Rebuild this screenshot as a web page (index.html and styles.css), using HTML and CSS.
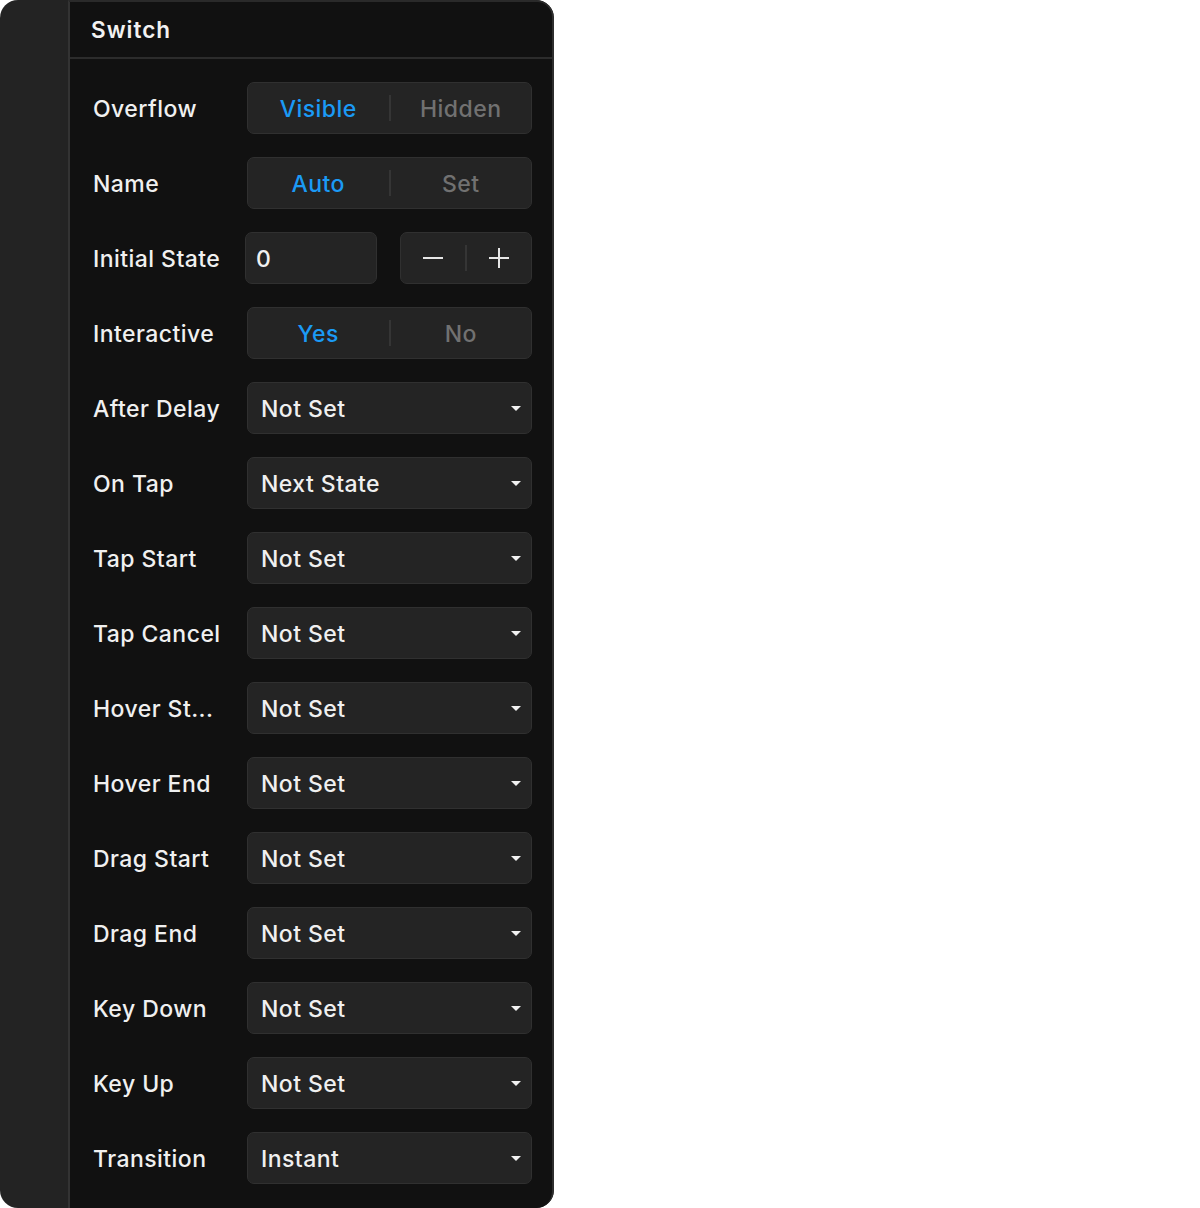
FILE: index.html
```html
<!DOCTYPE html>
<html>
<head>
<meta charset="utf-8">
<link rel="stylesheet" href="styles.css">
</head>
<body>
<div class="frame">
  <div class="strip"></div>
  <div class="panel">
    <div class="header">Switch</div>
    <div class="body">
      <div class="row">
        <div class="label">Overflow</div>
        <div class="seg"><span class="opt on">Visible</span><span class="div"></span><span class="opt">Hidden</span></div>
      </div>
      <div class="row">
        <div class="label">Name</div>
        <div class="seg"><span class="opt on">Auto</span><span class="div"></span><span class="opt">Set</span></div>
      </div>
      <div class="row">
        <div class="label">Initial State</div>
        <div class="pair">
          <div class="input"><span class="txt">0</span></div>
          <div class="stepper">
            <span class="step"><svg width="22" height="22" viewBox="0 0 22 22"><path d="M1 11H21" stroke="#e6e6e6" stroke-width="2"/></svg></span>
            <span class="div"></span>
            <span class="step"><svg width="22" height="22" viewBox="0 0 22 22"><path d="M1 11H21M11 1V21" stroke="#e6e6e6" stroke-width="2"/></svg></span>
          </div>
        </div>
      </div>
      <div class="row">
        <div class="label">Interactive</div>
        <div class="seg"><span class="opt on">Yes</span><span class="div"></span><span class="opt">No</span></div>
      </div>
      <div class="row"><div class="label">After Delay</div><div class="select"><span class="txt">Not Set</span><i class="caret"></i></div></div>
      <div class="row"><div class="label">On Tap</div><div class="select"><span class="txt">Next State</span><i class="caret"></i></div></div>
      <div class="row"><div class="label">Tap Start</div><div class="select"><span class="txt">Not Set</span><i class="caret"></i></div></div>
      <div class="row"><div class="label">Tap Cancel</div><div class="select"><span class="txt">Not Set</span><i class="caret"></i></div></div>
      <div class="row"><div class="label">Hover St...</div><div class="select"><span class="txt">Not Set</span><i class="caret"></i></div></div>
      <div class="row"><div class="label">Hover End</div><div class="select"><span class="txt">Not Set</span><i class="caret"></i></div></div>
      <div class="row"><div class="label">Drag Start</div><div class="select"><span class="txt">Not Set</span><i class="caret"></i></div></div>
      <div class="row"><div class="label">Drag End</div><div class="select"><span class="txt">Not Set</span><i class="caret"></i></div></div>
      <div class="row"><div class="label">Key Down</div><div class="select"><span class="txt">Not Set</span><i class="caret"></i></div></div>
      <div class="row"><div class="label">Key Up</div><div class="select"><span class="txt">Not Set</span><i class="caret"></i></div></div>
      <div class="row"><div class="label">Transition</div><div class="select"><span class="txt">Instant</span><i class="caret"></i></div></div>
    </div>
  </div>
</div>
</body>
</html>
```
FILE: styles.css
```css
* { box-sizing: border-box; }
html, body { margin: 0; padding: 0; background: #ffffff; }
body {
  font-family: Inter, "Noto Sans", sans-serif;
  -webkit-font-smoothing: antialiased;
}
.frame {
  width: 554px;
  height: 1208px;
  display: flex;
  background: #232323;
  border-radius: 18px;
  overflow: hidden;
}
.strip { width: 68px; flex: none; }
.panel {
  flex: 1;
  background: #111111;
  border-left: 2px solid #333333;
  border-top: 2px solid #2a2a2a;
  border-right: 2px solid #2e2e2e;
  border-radius: 0 17px 17px 0;
  display: flex;
  flex-direction: column;
}
.header {
  height: 57px;
  border-bottom: 2px solid #2c2c2c;
  display: flex;
  align-items: center;
  padding-left: 21px;
  padding-bottom: 1px;
  color: #f2f2f2;
  font-size: 22.5px;
  font-weight: 600;
  letter-spacing: 1px;
}
.body {
  padding: 23px 20px 0 23px;
  display: flex;
  flex-direction: column;
  gap: 23px;
}
.row {
  height: 52px;
  display: flex;
  align-items: center;
}
.label {
  width: 154px;
  flex: none;
  color: #f0f0f0;
  font-size: 23px;
  font-weight: 500;
  letter-spacing: 0.45px;
  white-space: nowrap;
  padding-top: 2px;
}
.seg, .select, .input, .stepper {
  height: 52px;
  background: #242424;
  border: 1px solid #303030;
  border-radius: 7px;
  font-size: 23px;
  font-weight: 500;
  letter-spacing: 0.45px;
}
.seg {
  width: 285px;
  display: flex;
  align-items: center;
}
.opt {
  flex: 1;
  text-align: center;
  color: #717171;
  padding-top: 2px;
}
.opt.on { color: #1b9af5; }
.txt { padding-top: 2px; }
.div {
  width: 2px;
  height: 26px;
  background: #353535;
  flex: none;
}
.pair {
  display: flex;
  gap: 23px;
  margin-left: -2px;
}
.input {
  width: 132px;
  color: #f0f0f0;
  display: flex;
  align-items: center;
  padding-left: 10px;
}
.stepper {
  width: 132px;
  display: flex;
  align-items: center;
}
.step {
  flex: 1;
  display: flex;
  justify-content: center;
  align-items: center;
}
.select {
  width: 285px;
  display: flex;
  align-items: center;
  justify-content: space-between;
  padding: 0 10px 0 13px;
  color: #f0f0f0;
}
.caret {
  width: 0;
  height: 0;
  border-left: 5.5px solid transparent;
  border-right: 5.5px solid transparent;
  border-top: 5px solid #f0f0f0;
}
```
